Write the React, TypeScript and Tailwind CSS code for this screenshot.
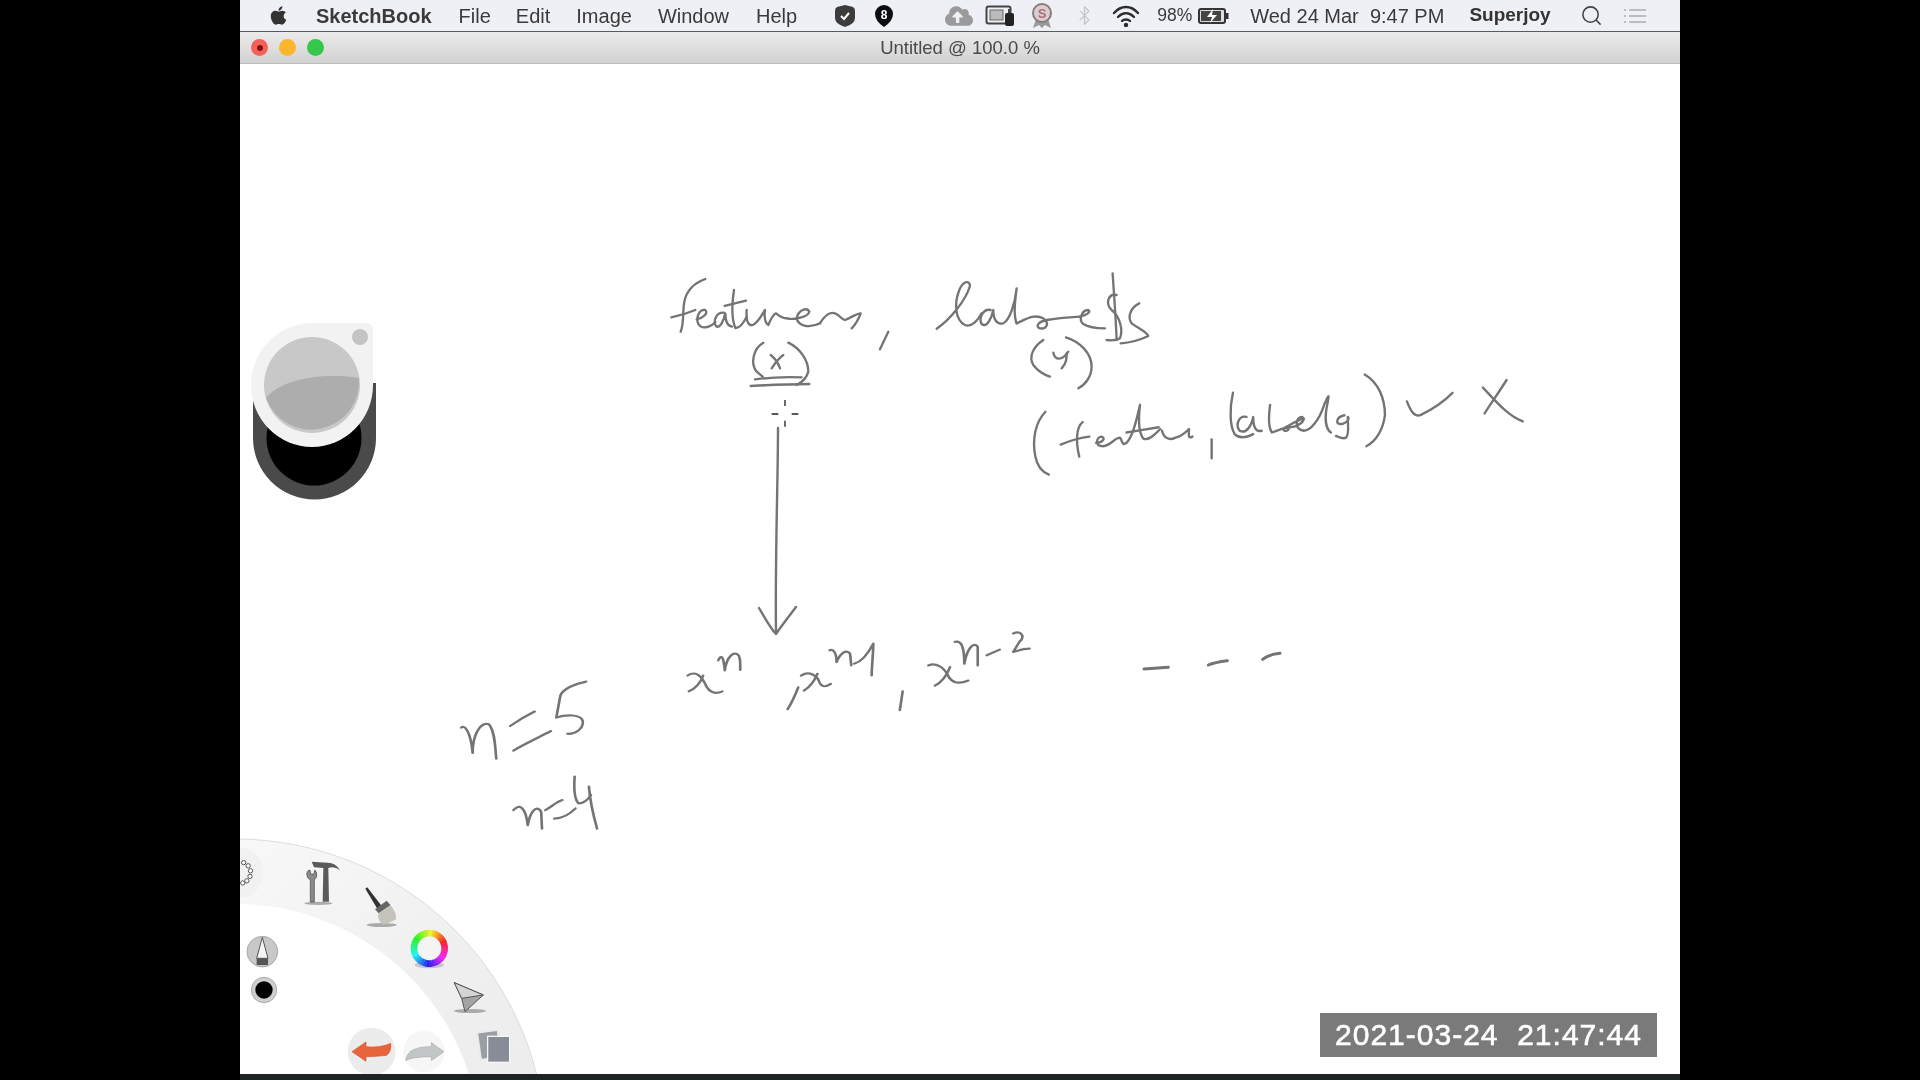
import { FaApple, FaCloudUploadAlt } from 'react-icons/fa'
import { Bluetooth, Search } from 'lucide-react'

// ink strokes, written in the coordinates of the crop they were read from
const topInk = [
  'M166 57 C135 68 110 90 103 125 C97 155 103 190 92 215',
  'M64 172 C88 167 112 160 136 150',
  'M140 178 C158 175 176 160 166 150 C150 146 136 170 145 192 C155 208 180 204 196 186',
  'M222 158 C200 155 188 182 198 198 C210 208 222 180 226 160 C226 180 232 198 246 200',
  'M252 90 C246 130 244 175 256 204 C268 205 280 190 290 170',
  'M224 138 C245 132 265 128 288 122',
  'M290 150 C288 175 292 200 308 195 C325 188 335 165 345 150 C342 170 345 190 355 195 C362 178 368 165 378 160 C390 170 398 175 412 175',
  'M412 175 C432 180 475 172 478 155 C470 140 445 150 440 175 C445 200 480 205 510 190',
  'M510 190 C525 165 540 155 555 160 C570 165 575 180 585 180 C600 175 620 160 632 160 C625 180 615 195 605 205',
  'M715 215 L690 268',
  'M340 248 C310 265 300 310 320 335 L338 350',
  'M362 285 C375 295 385 310 390 325',
  'M400 285 C385 295 375 310 365 325',
  'M415 248 C450 265 475 300 475 335 C470 355 460 365 440 375',
  'M315 358 C360 352 410 350 455 352',
  'M302 378 C360 375 420 372 478 372',
  'M860 206 C900 180 948 120 960 78 C960 60 940 62 928 90 C912 130 915 180 945 195 C965 203 985 180 995 160',
  'M1022 150 C1000 145 985 175 995 192 C1010 205 1025 175 1030 150 C1030 175 1038 195 1060 190 C1080 180 1095 130 1100 85 C1095 125 1090 165 1100 190',
  'M1100 190 C1125 180 1150 160 1180 175 C1200 190 1190 208 1170 205 C1155 200 1165 185 1190 180 C1220 175 1260 172 1290 170',
  'M1290 170 C1310 165 1325 155 1315 150 C1295 150 1285 180 1300 192 C1320 205 1345 205 1365 205',
  'M1388 40 C1392 100 1398 180 1400 240',
  'M1400 105 C1375 100 1365 130 1385 150 C1410 170 1420 210 1410 235 C1400 242 1385 242 1370 240',
  'M1468 130 C1445 140 1430 170 1445 190 C1465 205 1490 215 1495 228 C1470 240 1440 248 1412 250',
  'M1180 240 C1150 260 1135 290 1150 315 C1165 335 1185 345 1200 350',
  'M1210 278 C1215 300 1235 305 1255 275',
  'M1250 280 C1250 295 1250 310 1235 325',
  'M1248 232 C1290 245 1325 280 1325 320 C1325 350 1305 375 1285 385',
]

const rightInk = [
  'M105 150 C75 180 65 230 75 280 C80 305 95 325 115 332',
  'M215 180 C195 195 195 240 205 280',
  'M150 245 C175 235 205 225 235 222',
  'M255 240 C275 240 285 225 270 222 C255 225 250 250 275 250 C300 248 310 225 325 225 C335 235 330 250 345 240 C365 220 375 170 385 130 C380 170 380 210 395 228 C410 235 430 215 445 200',
  'M345 210 C375 205 410 200 440 195',
  'M450 205 C455 225 470 235 490 225 C505 222 515 215 530 200 C530 215 525 230 540 222',
  'M597 230 V285',
  'M660 95 C650 140 650 190 665 215 C680 230 700 225 720 215',
  'M700 165 C680 160 665 185 680 205 C700 215 715 190 720 165 C720 190 725 210 745 205',
  'M770 130 C765 165 765 195 775 210 C795 205 820 190 825 200 C820 210 800 205 815 195 C835 185 860 170 870 170',
  'M825 195 C850 195 880 175 865 165 C845 165 840 200 870 205 C890 205 915 175 930 130 C945 95 945 100 940 125 C930 170 935 200 950 210',
  'M990 160 C965 165 960 190 985 185 C1000 180 1005 170 1000 165 C1000 190 1005 215 995 225 C985 230 975 225 965 220',
  'M1050 42 C1090 65 1110 110 1110 160 C1105 200 1085 235 1055 250',
  'M1175 120 C1185 145 1195 165 1215 160 C1245 145 1285 120 1310 95',
  'M1400 80 C1430 110 1470 160 1518 178',
  'M1470 58 C1450 90 1420 130 1405 155',
]

const bottomInk = [
  'M52 320 C60 310 75 330 80 395 C80 340 100 300 120 310 C135 330 135 380 138 412',
  'M172 315 C190 300 210 285 232 272',
  'M180 388 C205 370 240 350 272 330',
  'M358 183 C330 190 300 205 295 225 L285 290 C310 280 345 280 350 300 C352 325 330 340 312 338',
  'M180 565 C195 545 210 555 215 610 C220 575 235 545 248 570 L250 620',
  'M258 565 C275 555 285 540 300 535',
  'M280 590 C300 590 320 575 332 560',
  'M330 465 C328 500 330 535 340 545 C350 545 362 535 370 520',
  'M365 495 C368 540 378 590 385 620',
  'M607 165 C625 150 640 165 650 190 C658 215 675 222 692 212',
  'M645 165 C640 185 625 205 610 212',
  'M682 120 C690 100 695 110 698 150 C702 110 720 90 732 105 C738 120 735 135 736 148',
  'M878 200 C870 225 860 250 852 265',
  'M885 165 C905 150 925 165 930 185 C935 200 945 200 958 190',
  'M925 160 C918 180 905 200 892 210',
  'M955 90 C965 85 972 100 972 125 C980 100 995 85 1005 100 L1008 135',
  'M1015 130 C1030 125 1045 110 1062 70 C1062 100 1058 140 1058 165',
  'M1134 212 L1127 268',
  'M1197 135 C1215 125 1235 140 1245 165 C1255 190 1275 190 1295 180',
  'M1250 140 C1242 165 1230 185 1213 195',
  'M1262 65 C1278 60 1285 80 1285 130 C1290 95 1305 60 1318 80 L1318 135',
  'M1340 105 L1372 88',
  'M1405 40 C1425 30 1435 50 1420 65 L1405 95 C1420 90 1430 85 1445 85',
]

const hues = Array.from({ length: 36 }, (_, i) => i * 10)

function Sketch() {
  return (
    <g fill="none" strokeLinecap="round" strokeLinejoin="round" stroke="#747474">
      <g transform="translate(650 260) scale(0.3333)" strokeWidth="7">
        {topInk.map((d) => <path key={d} d={d} />)}
      </g>
      <g transform="translate(1010 360) scale(0.3378 0.345)" strokeWidth="7">
        {rightInk.map((d) => <path key={d} d={d} />)}
      </g>
      <g transform="translate(440 620) scale(0.408 0.3365)" strokeWidth="6.5">
        {bottomInk.map((d) => <path key={d} d={d} />)}
      </g>
      {/* arrow */}
      <path d="M778 428 C778 480 775 560 776 632" strokeWidth="2.4" />
      <path d="M759 608 C765 618 770 628 776 634 C782 625 790 615 796 607" strokeWidth="2.4" />
      {/* dashes */}
      <g transform="translate(1100 630) scale(0.3333)" strokeWidth="9">
        <path d="M132 117 L205 112" />
        <path d="M325 105 C340 98 365 94 382 92" />
        <path d="M488 88 C500 78 520 72 540 70" />
      </g>
      {/* crosshair cursor */}
      <g transform="translate(650 260) scale(0.3333)" stroke="#222" strokeWidth="4" strokeLinecap="butt">
        <path d="M405 420 V438 M405 482 V500 M365 462 H385 M425 462 H445" />
      </g>
    </g>
  )
}

function ColorPuck() {
  return (
    <g>
      <path d="M253 438 A61.5 61.5 0 0 0 376 438 V383 H253 Z" fill="#4a4a4a" />
      <circle cx="314" cy="438" r="47.5" fill="#000" />
      <path d="M312 323 H366 Q373 323 373 330 V385 A61 62 0 1 1 312 323 Z" fill="#f2f2f2" />
      <circle cx="312" cy="385" r="48" fill="#c8c8c8" />
      <path d="M266 398 C280 380 320 372 359 378 A48 48 0 0 1 266 398 Z" fill="#adadad" />
      <circle cx="360" cy="337" r="8" fill="#c4c4c4" />
    </g>
  )
}

function RadialMenu() {
  return (
    <g>
      <defs>
        <linearGradient id="ringFill" x1="0" y1="0" x2="1" y2="1">
          <stop offset="0" stopColor="#ffffff" />
          <stop offset="0.5" stopColor="#f0f0f0" />
          <stop offset="1" stopColor="#e8e8e8" />
        </linearGradient>
      </defs>
      <circle cx="235" cy="1150" r="278.5" fill="none" stroke="url(#ringFill)" strokeWidth="65" />
      <circle cx="235" cy="1150" r="311" fill="none" stroke="#dcdcdc" strokeWidth="1" />
      <g transform="translate(240 830) scale(0.3333)">
        {/* settings dots */}
        <ellipse cx="0" cy="128" rx="70" ry="75" fill="#ececec" opacity="0.5" />
        {[-70, -40, -10, 20, 50, 75].map((a) => (
          <circle
            key={a}
            cx={Math.cos((a * Math.PI) / 180) * 32}
            cy={128 + Math.sin((a * Math.PI) / 180) * 32}
            r="6.5"
            fill="#fff"
            stroke="#555"
            strokeWidth="3"
          />
        ))}

        {/* tools */}
        <ellipse cx="235" cy="220" rx="42" ry="5" fill="#aaa" />
        <path d="M200 130 Q203 120 210 120 L212 132 L222 132 L224 120 Q232 124 230 140 L223 150 L223 216 L211 216 L211 150 Q200 145 200 130 Z" fill="#8a8a8a" stroke="#444" strokeWidth="2" />
        <path d="M215 95 L262 98 Q285 97 300 120 Q282 108 265 114 L267 215 L248 215 L250 114 L222 112 Z" fill="#5a5a5a" />

        {/* brush */}
        <ellipse cx="425" cy="285" rx="45" ry="6" fill="#aaa" />
        <path d="M376 176 L382 172 L425 228 L412 236 Z" fill="#333" />
        <path d="M405 238 L440 212 L452 226 L416 250 Z" fill="#666" />
        <path d="M416 250 L452 226 Q472 252 468 268 Q440 285 425 282 Q410 265 416 250 Z" fill="#c4c4bc" />

        {/* colour wheel */}
        <ellipse cx="568" cy="405" rx="44" ry="10" fill="#aaa" opacity="0.6" />
        <circle cx="568" cy="355" r="35" fill="#f4f4f4" />
        {hues.map((h) => {
          const a0 = ((h - 100) * Math.PI) / 180
          const a1 = ((h - 89) * Math.PI) / 180
          return (
            <path
              key={h}
              d={`M${568 + 46 * Math.cos(a0)} ${355 + 46 * Math.sin(a0)} A46 46 0 0 1 ${568 + 46 * Math.cos(a1)} ${355 + 46 * Math.sin(a1)}`}
              fill="none"
              stroke={`hsl(${(430 - h) % 360} 90% 55%)`}
              strokeWidth="20"
            />
          )
        })}

        {/* selection arrow */}
        <ellipse cx="690" cy="543" rx="48" ry="6" fill="#aaa" />
        <path d="M643 458 L730 495 L675 545 L665 505 Z" fill="#a4a4a4" stroke="#555" strokeWidth="3" strokeLinejoin="round" />
        <path d="M643 458 L730 495 L665 505 Z" fill="#d4d4d4" stroke="#555" strokeWidth="3" strokeLinejoin="round" />

        {/* undo / redo */}
        <circle cx="395" cy="665" r="72" fill="#ececec" />
        <path d="M336 665 L378 636 L378 650 Q420 655 452 640 Q455 665 440 676 Q410 680 378 680 L378 694 Z" fill="#e8643a" stroke="#d85530" strokeWidth="2" />
        <circle cx="552" cy="665" r="62" fill="#f6f6f6" />
        <path d="M612 665 L574 638 L574 650 Q530 650 510 665 Q498 678 497 692 Q515 680 574 680 L574 692 Z" fill="#c2c6c6" stroke="#a8acac" strokeWidth="2" />

        {/* layers */}
        <rect x="718" y="605" width="60" height="80" fill="#9a9da3" stroke="#e8e8e8" strokeWidth="4" transform="rotate(-8 745 645)" />
        <rect x="743" y="619" width="66" height="78" fill="#878c96" stroke="#f6f6f6" strokeWidth="4" />

        {/* pen and current colour */}
        <circle cx="67" cy="365" r="46" fill="#c8c8c8" stroke="#a8a8a8" strokeWidth="3" />
        <path d="M67 322 L84 385 H50 Z" fill="#f4f4f4" stroke="#555" strokeWidth="3" />
        <rect x="50" y="385" width="34" height="20" fill="#555" />
        <circle cx="72" cy="480" r="38" fill="#cfcfcf" stroke="#aaa" strokeWidth="3" />
        <circle cx="72" cy="480" r="26" fill="#000" />
      </g>
    </g>
  )
}

function MenuItem({ children, className }: { children: string; className: string }) {
  return <span className={className}>{children}</span>
}

export default function App() {
  return (
    <div className="w-[1920px] h-[1080px] bg-black flex flex-col items-center overflow-hidden font-['Liberation_Sans',sans-serif]">
      <div className="w-[1440px] h-[1074px] flex flex-col bg-white">
        {/* menu bar */}
        <div className="h-[32px] shrink-0 bg-[#eef0f5] border-b border-[#5a5a5a] flex items-center text-[20px] text-[#3a3a3a] blur-[0.5px]">
          <FaApple className="ml-[28px] text-[21px] text-[#333] shrink-0" />
          <MenuItem className="ml-[27px] font-bold">SketchBook</MenuItem>
          <MenuItem className="ml-[27px]">File</MenuItem>
          <MenuItem className="ml-[25px]">Edit</MenuItem>
          <MenuItem className="ml-[26px]">Image</MenuItem>
          <MenuItem className="ml-[26px]">Window</MenuItem>
          <MenuItem className="ml-[27px]">Help</MenuItem>

          <svg className="ml-[37px] shrink-0" width="22" height="24" viewBox="0 0 22 24">
            <path d="M11 1 L19 3 Q21 4 21 7 V14 Q21 20 11 23 Q1 20 1 14 V7 Q1 4 3 3 Z" fill="#3c3c3c" />
            <path d="M7 12 L10 15 L15 9" fill="none" stroke="#fff" strokeWidth="2" />
          </svg>
          <svg className="ml-[18px] shrink-0" width="20" height="24" viewBox="0 0 20 24">
            <path d="M10 1 A9 9 0 0 1 19 10 Q19 17 10 23 Q1 17 1 10 A9 9 0 0 1 10 1 Z" fill="#0c0c14" />
            <text x="10" y="15" textAnchor="middle" fontSize="12" fontWeight="700" fill="#fff">8</text>
          </svg>

          <FaCloudUploadAlt className="ml-[51px] text-[28px] text-[#9a9a9a] shrink-0" />
          <svg className="ml-[12px] shrink-0" width="30" height="24" viewBox="0 0 30 24">
            <rect x="1.5" y="2.5" width="24" height="17" rx="2" fill="none" stroke="#444" strokeWidth="2" />
            <rect x="5" y="6" width="13" height="10" fill="#bbb" stroke="#666" />
            <rect x="20" y="9" width="9" height="13" rx="2" fill="#222" />
            <rect x="23" y="5" width="3" height="4" fill="#444" />
          </svg>
          <svg className="ml-[15px] shrink-0" width="24" height="26" viewBox="0 0 24 26">
            <path d="M6 16 L3 25 L9 22 L12 25 L15 22 L21 25 L18 16 Z" fill="#999" />
            <circle cx="12" cy="10" r="9" fill="#d8d0d0" stroke="#8a7a7a" strokeWidth="2" />
            <text x="12" y="15" textAnchor="middle" fontSize="13" fontWeight="700" fill="#b06a78">S</text>
          </svg>
          <Bluetooth className="ml-[20px] shrink-0 text-[#c4c4c4]" size={21} strokeWidth={1.5} />
          <svg className="ml-[17px] shrink-0" width="28" height="22" viewBox="0 0 28 22" fill="none" stroke="#2c2c2c" strokeWidth="2.4" strokeLinecap="round">
            <path d="M2 8 C9 0 19 0 26 8" />
            <path d="M6 12 C11 7 17 7 22 12" />
            <path d="M10 16 C12 14 16 14 18 16" />
            <circle cx="14" cy="20" r="1" fill="#2c2c2c" />
          </svg>
          <span className="ml-[17px] text-[17.5px]">98%</span>
          <svg className="ml-[6px] shrink-0" width="32" height="18" viewBox="0 0 32 18">
            <rect x="1" y="2" width="26" height="14" rx="2" fill="#ddd" stroke="#333" strokeWidth="2" />
            <rect x="3" y="4" width="20" height="10" fill="#444" />
            <path d="M15 2 L9 10 H14 L12 16 L19 8 H14 Z" fill="#fff" />
            <rect x="28" y="6" width="2.5" height="6" fill="#333" />
          </svg>
          <span className="ml-[20px] whitespace-pre">Wed 24 Mar  9:47 PM</span>
          <span className="ml-[25px] font-bold text-[#333] text-[19px]">Superjoy</span>
          <Search className="ml-[29px] text-[#444] shrink-0" size={23} strokeWidth={1.6} />
          <svg className="ml-[20px] shrink-0" width="24" height="18" viewBox="0 0 24 18" stroke="#aaa" strokeWidth="1.6">
            <path d="M1 3 H3 M6 3 H23 M1 9 H3 M6 9 H23 M1 15 H3 M6 15 H23" />
          </svg>
        </div>

        {/* title bar */}
        <div className="h-[32px] shrink-0 bg-gradient-to-b from-[#ebebeb] to-[#d2d2d2] border-b border-[#bdbdbd] flex items-center relative blur-[0.4px]">
          <div className="flex items-center gap-[11px] ml-[11px]">
            <div className="w-[17px] h-[17px] rounded-full bg-[#f5605a] flex items-center justify-center">
              <div className="w-[6px] h-[6px] rounded-full bg-[#7d1410]" />
            </div>
            <div className="w-[17px] h-[17px] rounded-full bg-[#fbb62e]" />
            <div className="w-[17px] h-[17px] rounded-full bg-[#34c749]" />
          </div>
          <span className="absolute inset-x-0 text-center text-[18.5px] text-[#4a4a4a]">Untitled @ 100.0 %</span>
        </div>

        {/* drawing canvas */}
        <div className="flex-1 relative overflow-hidden bg-white">
          <svg className="absolute inset-0 w-full h-full blur-[0.6px]" viewBox="240 64 1440 1010">
            <Sketch />
            <ColorPuck />
            <RadialMenu />
          </svg>
          <div className="absolute right-[23px] bottom-[17px] w-[337px] h-[44px] bg-[#7a7a7a] flex items-center justify-center text-white text-[30px] tracking-[1px] [-webkit-text-stroke:0.6px_white] whitespace-pre blur-[0.3px] pb-[2px]">
            2021-03-24  21:47:44
          </div>
        </div>
      </div>
      <div className="w-[1440px] h-[6px] bg-[#1e2426]" />
    </div>
  )
}
